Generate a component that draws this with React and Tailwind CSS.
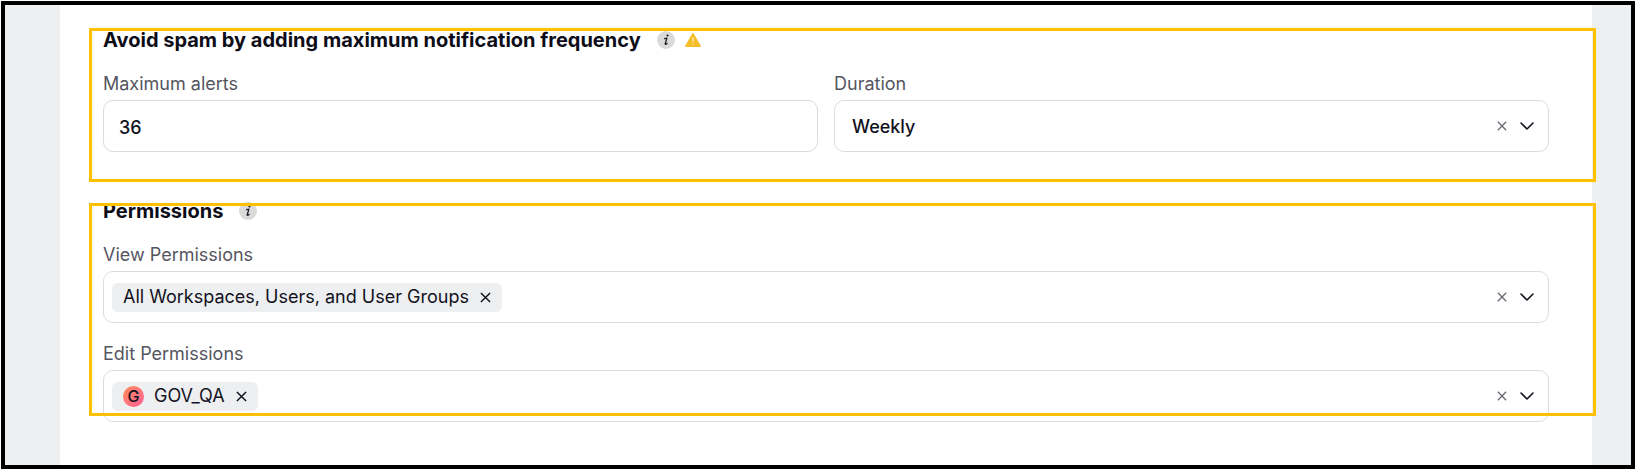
import React, { useState } from 'react';

const durations = ['Daily', 'Weekly', 'Monthly'];

function InfoIcon() {
  return (
    <svg viewBox="0 0 18 18" className="w-[18px] h-[18px] shrink-0" aria-hidden="true">
      <circle cx="9" cy="9" r="9" fill="#dadada" />
      <circle cx="10.5" cy="4.5" r="1.1" fill="#1c1c28" />
      <path d="M7.6 7.6 L9.9 7.1 L8.2 12.8 Q8 14 10.1 12.4" fill="none" stroke="#1c1c28" strokeWidth="1.3" strokeLinecap="round" strokeLinejoin="round" />
    </svg>
  );
}

function WarningIcon() {
  return (
    <svg viewBox="0 0 16 14" className="w-4 h-3.5 shrink-0" aria-hidden="true">
      <path d="M7.3 0.6 Q8 -0.4 8.7 0.6 L15.8 12.7 Q16.2 13.8 15 13.9 L1 13.9 Q-0.2 13.8 0.2 12.7 Z" fill="#f5bd27" />
      <path d="M8 4.6 V8.6 M8 10.4 V11.6" stroke="#fdf0cd" strokeWidth="1.4" />
    </svg>
  );
}

function Cross({ className }) {
  return (
    <svg viewBox="0 0 12 12" className={className} fill="none" stroke="currentColor" aria-hidden="true">
      <path d="M1 1 L11 11 M11 1 L1 11" strokeWidth="1.6" />
    </svg>
  );
}

function Chevron() {
  return (
    <svg viewBox="0 0 14 8" className="w-3.5 h-2 shrink-0 text-[#12121e] pointer-events-none" fill="none" stroke="currentColor" aria-hidden="true">
      <path d="M1 1 L7 7 L13 1" strokeWidth="1.6" strokeLinecap="round" strokeLinejoin="round" />
    </svg>
  );
}

function Heading({ children }) {
  return (
    <h2 className="text-xl leading-6 font-bold text-[#0d0d18]">{children}</h2>
  );
}

function Label({ htmlFor, children }) {
  return (
    <label htmlFor={htmlFor} className="block text-lg leading-6 text-[#55555f]">{children}</label>
  );
}

function SelectBox({ id, value, onChange, onClear, options, chips }) {
  return (
    <div className="mt-1 h-13 flex items-center rounded-[10px] border border-[#dcdcde] bg-white pl-2 pr-3.5">
      {chips}
      <select
        id={id}
        value={value}
        onChange={onChange}
        className="flex-1 min-w-0 h-full pl-[9px] pt-0.5 appearance-none bg-transparent text-lg font-medium text-[#12121e] focus:outline-none"
      >
        <option value=""></option>
        {options.map((o) => <option key={o} value={o}>{o}</option>)}
      </select>
      <button type="button" aria-label="Clear" onClick={onClear} className="mr-[13px] shrink-0 text-[#6a6a75]">
        <Cross className="w-2.5 h-2.5" />
      </button>
      <Chevron />
    </div>
  );
}

function Chip({ avatar, text, onRemove }) {
  return (
    <span className="h-[29px] flex items-center rounded-md bg-[#eeeff1] px-[11px] text-lg text-[#12121e]">
      {avatar && (
        <span className="w-[21px] h-[21px] mr-2.5 rounded-full bg-linear-to-br from-[#ff8c55] to-[#ff5c93] flex items-center justify-center text-base font-medium">
          {avatar}
        </span>
      )}
      {text}
      <button type="button" aria-label={`Remove ${text}`} onClick={onRemove} className="ml-[11px]">
        <Cross className="w-[11px] h-[11px]" />
      </button>
    </span>
  );
}

export default function App() {
  const [maxAlerts, setMaxAlerts] = useState('36');
  const [duration, setDuration] = useState('Weekly');
  const [viewers, setViewers] = useState(['All Workspaces, Users, and User Groups']);
  const [editors, setEditors] = useState(['GOV_QA']);

  return (
    <div className="min-h-screen flex p-px bg-white font-[Inter,sans-serif]">
      <div className="flex-1 flex border-4 border-black bg-[#eeeff1] pl-[55px] pr-[39px]">
        <main className="flex-1 bg-white px-[43px] pt-[23px] pb-10">
          {/* Notification frequency */}
          <section className="relative">
            <div className="flex items-center gap-4">
              <Heading>Avoid spam by adding maximum notification frequency</Heading>
              <span className="flex items-center gap-2.5">
                <InfoIcon />
                <WarningIcon />
              </span>
            </div>
            <div className="mt-5 grid grid-cols-2 gap-4">
              <div>
                <Label htmlFor="max-alerts">Maximum alerts</Label>
                <input
                  id="max-alerts"
                  type="text"
                  value={maxAlerts}
                  onChange={(e) => setMaxAlerts(e.target.value)}
                  className="mt-1 block w-full h-13 rounded-[10px] border border-[#dcdcde] px-[15px] pt-0.5 text-lg font-medium text-[#12121e] focus:outline-none"
                />
              </div>
              <div>
                <Label htmlFor="duration">Duration</Label>
                <SelectBox
                  id="duration"
                  value={duration}
                  options={durations}
                  onChange={(e) => setDuration(e.target.value)}
                  onClear={() => setDuration('')}
                />
              </div>
            </div>
            {/* highlight frame */}
            <div className="absolute top-0 -left-3.5 -right-[47px] -bottom-[30px] border-3 border-[#ffc000] pointer-events-none" />
          </section>

          {/* Permissions */}
          <section className="relative mt-[47px]">
            <div className="flex items-center gap-4">
              <Heading>Permissions</Heading>
              <InfoIcon />
            </div>
            <div className="mt-5 flex flex-col gap-[19px]">
              <div>
                <Label htmlFor="view-permissions">View Permissions</Label>
                <SelectBox
                  id="view-permissions"
                  value=""
                  options={['All Workspaces, Users, and User Groups']}
                  onChange={(e) => setViewers([e.target.value])}
                  onClear={() => setViewers([])}
                  chips={viewers.map((v) => <Chip key={v} text={v} onRemove={() => setViewers([])} />)}
                />
              </div>
              <div>
                <Label htmlFor="edit-permissions">Edit Permissions</Label>
                <SelectBox
                  id="edit-permissions"
                  value=""
                  options={['GOV_QA']}
                  onChange={(e) => setEditors([e.target.value])}
                  onClear={() => setEditors([])}
                  chips={editors.map((v) => <Chip key={v} avatar={v[0]} text={v} onRemove={() => setEditors([])} />)}
                />
              </div>
            </div>
            <div className="absolute top-1 -left-3.5 -right-[47px] bottom-1.5 border-3 border-[#ffc000] pointer-events-none" />
          </section>
        </main>
      </div>
    </div>
  );
}
